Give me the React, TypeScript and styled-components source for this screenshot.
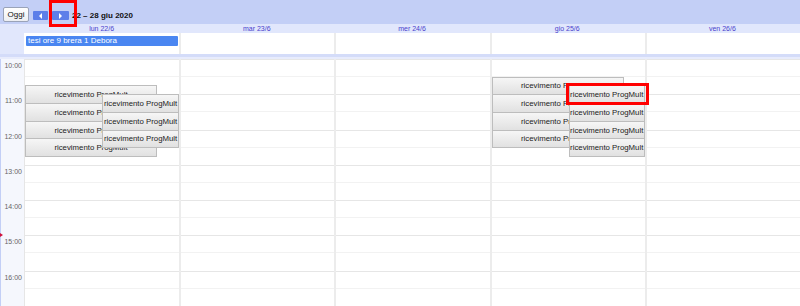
import styled, { createGlobalStyle } from 'styled-components';

const HOUR = 247 / 7;
const FIRST_HOUR = 10;
const HOURS = [10, 11, 12, 13, 14, 15, 16];

const GlobalStyle = createGlobalStyle`
  * {
    box-sizing: border-box;
  }

  body {
    margin: 0;
    background: #fff;
    font-family: "Liberation Sans", Arial, sans-serif;
  }
`;

const Page = styled.div`
  position: relative;
  width: 800px;
  height: 306px;
  overflow: hidden;
`;

const Toolbar = styled.div`
  display: flex;
  align-items: center;
  gap: 4px;
  height: 24px;
  padding: 5px 0 0 3px;
  background: #c3cff6;
`;

const TodayButton = styled.button`
  width: 26px;
  height: 15px;
  padding: 0;
  border: 1px solid #9aa3b8;
  border-radius: 2px;
  background: linear-gradient(#ffffff, #eceef2);
  font-family: inherit;
  font-size: 8px;
  color: #111;
`;

const NavButton = styled.button<{ $wide?: boolean }>`
  display: flex;
  align-items: center;
  justify-content: center;
  width: ${({ $wide }) => ($wide ? 17 : 15)}px;
  height: 9px;
  margin-top: 2px;
  padding: 0;
  border: none;
  border-radius: 1px;
  background: #5d7fe9;
`;

const Arrow = styled.span<{ $dir: 'left' | 'right' }>`
  width: 0;
  height: 0;
  border-top: 3px solid transparent;
  border-bottom: 3px solid transparent;
  ${({ $dir }) =>
    $dir === 'left' ? 'border-right: 3px solid #fff;' : 'border-left: 3px solid #fff;'}
`;

const RangeTitle = styled.span`
  margin-left: -1px;
  margin-top: 1px;
  font-size: 8px;
  font-weight: bold;
  color: #111;
`;

const RedFrame = styled.div<{ $x: number; $y: number; $w: number; $h: number }>`
  position: absolute;
  left: ${({ $x }) => $x}px;
  top: ${({ $y }) => $y}px;
  width: ${({ $w }) => $w}px;
  height: ${({ $h }) => $h}px;
  border: 3px solid #f00;
  z-index: 10;
`;

const Columns = styled.div`
  display: grid;
  grid-template-columns: 24px repeat(5, 1fr);
`;

const DayHeaderRow = styled(Columns)`
  height: 9px;
  background: #e1e7fc;
`;

const DayLabel = styled.div`
  font-size: 7px;
  line-height: 9px;
  text-align: center;
  color: #4a3fcc;
`;

const AllDayRow = styled(Columns)`
  height: 21px;
`;

const AllDayGutter = styled.div`
  background: #e1e7fc;
`;

const AllDayCell = styled.div<{ $first?: boolean }>`
  padding: 3px 1px 0 2px;
  border-left: ${({ $first }) => ($first ? '0' : '2px solid #ececec')};
  background: #fff;
`;

const AllDayEvent = styled.div`
  height: 10px;
  padding-left: 2px;
  border-radius: 1px;
  background: #4a86f1;
  font-size: 8px;
  line-height: 10px;
  color: #fff;
  white-space: nowrap;
`;

const Divider = styled.div`
  height: 5px;
  border-top: 3px solid #d4dcf9;
  border-bottom: 2px solid #e8ecfc;
`;

const Body = styled(Columns)`
  height: 247px;
`;

const TimeGutter = styled.div`
  position: relative;
  border-left: 1px solid #c3cff6;
  background: #f5f7fd;
`;

const HourLabel = styled.div`
  height: ${HOUR}px;
  padding: 3px 2px 0 0;
  font-size: 7px;
  text-align: right;
  color: #666;
`;

const NowMarker = styled.span`
  position: absolute;
  left: -1px;
  top: 174px;
  width: 0;
  height: 0;
  border-top: 2px solid transparent;
  border-bottom: 2px solid transparent;
  border-left: 3px solid #d0103a;
`;

const DayColumn = styled.div<{ $first?: boolean }>`
  position: relative;
  border-left: ${({ $first }) => ($first ? '1px solid #e6e6e6' : '2px solid #ececec')};
`;

const HourSlot = styled.div`
  height: ${HOUR}px;
  border-top: 1px solid #e6e6e6;
  background: linear-gradient(
    to bottom,
    transparent calc(50% - 1px),
    #f2f2f2 calc(50% - 1px),
    #f2f2f2 50%,
    transparent 50%
  );
`;

const Event = styled.div<{ $lane: 'wide' | 'narrow' }>`
  position: absolute;
  left: ${({ $lane }) => ($lane === 'wide' ? '0' : '77px')};
  width: ${({ $lane }) => ($lane === 'wide' ? '132px' : 'auto')};
  right: ${({ $lane }) => ($lane === 'wide' ? 'auto' : '0')};
  z-index: ${({ $lane }) => ($lane === 'wide' ? 1 : 2)};
  display: flex;
  align-items: center;
  justify-content: center;
  border: 1px solid #bdbdbd;
  background: linear-gradient(#f6f6f6, #e1e1e1);
  font-size: 7.8px;
  color: #222;
  white-space: nowrap;
  overflow: hidden;
`;

type CalEvent = { start: number; lane: 'wide' | 'narrow' };

const days: { label: string; events: CalEvent[] }[] = [
  {
    label: 'lun 22/6',
    events: [
      { start: 10.75, lane: 'wide' },
      { start: 11.25, lane: 'wide' },
      { start: 11.75, lane: 'wide' },
      { start: 12.25, lane: 'wide' },
      { start: 11, lane: 'narrow' },
      { start: 11.5, lane: 'narrow' },
      { start: 12, lane: 'narrow' },
    ],
  },
  { label: 'mar 23/6', events: [] },
  { label: 'mer 24/6', events: [] },
  {
    label: 'gio 25/6',
    events: [
      { start: 10.5, lane: 'wide' },
      { start: 11, lane: 'wide' },
      { start: 11.5, lane: 'wide' },
      { start: 12, lane: 'wide' },
      { start: 10.75, lane: 'narrow' },
      { start: 11.25, lane: 'narrow' },
      { start: 11.75, lane: 'narrow' },
      { start: 12.25, lane: 'narrow' },
    ],
  },
  { label: 'ven 26/6', events: [] },
];

const App = () => {
  return (
    <>
      <GlobalStyle />
      <Page>
        <Toolbar>
          <TodayButton>Oggi</TodayButton>
          <NavButton>
            <Arrow $dir="left" />
          </NavButton>
          <NavButton $wide>
            <Arrow $dir="right" />
          </NavButton>
          <RangeTitle>22 – 28 giu 2020</RangeTitle>
        </Toolbar>
        <RedFrame $x={49} $y={0} $w={28} $h={27} />
        <RedFrame $x={566} $y={83} $w={83} $h={22} />

        <DayHeaderRow>
          <div />
          {days.map((d) => (
            <DayLabel key={d.label}>{d.label}</DayLabel>
          ))}
        </DayHeaderRow>

        <AllDayRow>
          <AllDayGutter />
          {days.map((d, i) => (
            <AllDayCell key={d.label} $first={i === 0}>
              {i === 0 && <AllDayEvent>tesi ore 9 brera 1 Debora</AllDayEvent>}
            </AllDayCell>
          ))}
        </AllDayRow>

        <Divider />

        <Body>
          <TimeGutter>
            {HOURS.map((h) => (
              <HourLabel key={h}>{h}:00</HourLabel>
            ))}
            <NowMarker />
          </TimeGutter>
          {days.map((d, i) => (
            <DayColumn key={d.label} $first={i === 0}>
              {HOURS.map((h) => (
                <HourSlot key={h} />
              ))}
              {d.events.map((ev, j) => (
                <Event
                  key={j}
                  $lane={ev.lane}
                  style={{ top: (ev.start - FIRST_HOUR) * HOUR, height: HOUR / 2 + 1 }}
                >
                  ricevimento ProgMult
                </Event>
              ))}
            </DayColumn>
          ))}
        </Body>
      </Page>
    </>
  );
};

export default App;
